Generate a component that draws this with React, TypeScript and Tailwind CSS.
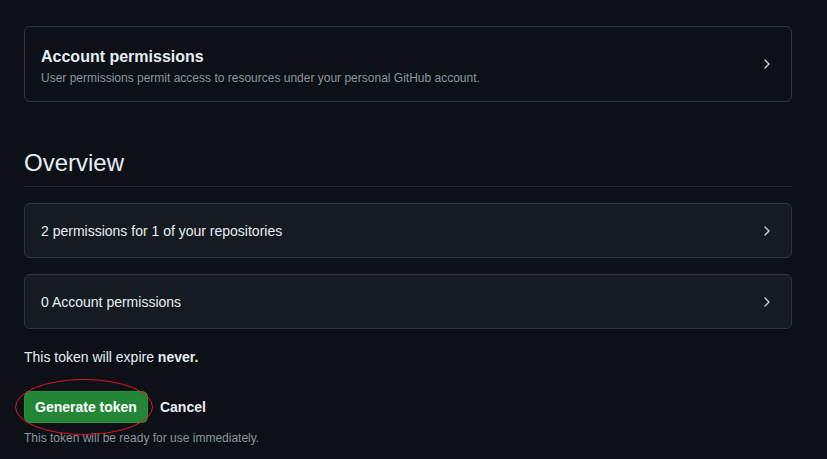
import { ChevronRight } from "lucide-react";

const font = { fontFamily: '"Segoe UI", "Liberation Sans", Arial, sans-serif' };

function Row({ children, muted }: { children: React.ReactNode; muted?: boolean }) {
  return (
    <div
      className={`flex items-center justify-between rounded-md border border-[#30363d] pl-4 pr-4 ${
        muted ? "bg-[#0d1117]" : "bg-[#161b22]"
      }`}
    >
      <div className="min-w-0">{children}</div>
      <ChevronRight className="w-4 h-4 text-[#c9d1d9] shrink-0" strokeWidth={2} />
    </div>
  );
}

export default function App() {
  return (
    <div className="w-[827px] h-[459px] bg-[#0d1117] text-[#e6edf3] overflow-hidden" style={font}>
      <div className="w-[768px] ml-6 pt-[26px]">
        {/* Account permissions */}
        <Row muted>
          <div className="h-[74px] flex flex-col justify-center pt-[3px]">
            <div className="text-base font-semibold leading-6">Account permissions</div>
            <div className="text-xs leading-[18px] text-[#8b949e]">
              User permissions permit access to resources under your personal GitHub account.
            </div>
          </div>
        </Row>

        {/* Overview */}
        <h2 className="mt-[46px] text-2xl font-normal leading-[30px] pb-2 border-b border-[#21262d]">Overview</h2>

        <div className="mt-4 flex flex-col gap-4">
          <Row>
            <div className="h-[53px] flex items-center text-sm">2 permissions for 1 of your repositories</div>
          </Row>
          <Row>
            <div className="h-[53px] flex items-center text-sm">0 Account permissions</div>
          </Row>
        </div>

        <p className="mt-[18px] text-sm leading-5">
          This token will expire <span className="font-bold">never.</span>
        </p>

        <div className="relative mt-6 flex items-center gap-3">
          <button className="h-8 px-[10px] rounded-md bg-[#238636] border border-[#2ea043]/40 text-sm font-bold text-white">
            Generate token
          </button>
          <button className="text-sm font-bold text-[#e6edf3]">Cancel</button>
          {/* red annotation ellipse */}
          <svg className="absolute -left-[10px] -top-[13px] pointer-events-none" width="142" height="58" viewBox="0 0 142 58">
            <ellipse cx="70" cy="29" rx="68.5" ry="27.5" fill="none" stroke="#e0141c" strokeWidth="1" />
          </svg>
        </div>

        <p className="mt-[7px] text-xs text-[#8b949e]">This token will be ready for use immediately.</p>
      </div>
    </div>
  );
}
